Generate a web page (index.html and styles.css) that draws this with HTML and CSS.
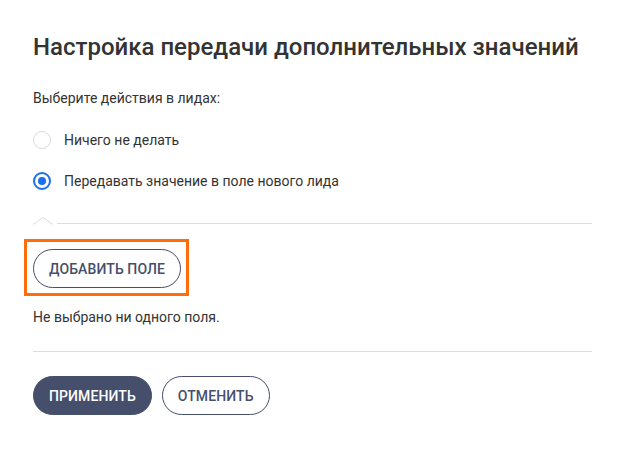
FILE: index.html
```html
<!DOCTYPE html>
<html lang="ru">
<head>
<meta charset="utf-8">
<link rel="stylesheet" href="styles.css">
</head>
<body>
<div class="panel">
  <h1 class="title">Настройка передачи дополнительных значений</h1>
  <p class="label">Выберите действия в лидах:</p>
  <div class="radios">
    <label class="radio"><span class="dot"></span><span>Ничего не делать</span></label>
    <label class="radio checked"><span class="dot"></span><span>Передавать значение в поле нового лида</span></label>
  </div>
  <div class="notch-divider">
    <svg class="notch" width="24" height="9" viewBox="0 0 24 9"><path d="M0 8.5 L10 1.5 L20 8.5" fill="none" stroke="#dcdcdc" stroke-width="1"/></svg>
  </div>
  <div class="highlight">
    <button class="btn btn-outline">ДОБАВИТЬ ПОЛЕ</button>
  </div>
  <p class="empty">Не выбрано ни одного поля.</p>
  <div class="divider"></div>
  <div class="actions">
    <button class="btn btn-primary">ПРИМЕНИТЬ</button>
    <button class="btn btn-outline">ОТМЕНИТЬ</button>
  </div>
</div>
</body>
</html>
```
FILE: styles.css
```css
* { box-sizing: border-box; }
html, body { margin: 0; padding: 0; background: #fff; }
body {
  font-family: Roboto, "Liberation Sans", sans-serif;
  color: #333;
  width: 624px;
  height: 449px;
  overflow: hidden;
}
.panel {
  padding: 32px 32px 0 33px;
}
.title {
  margin: 0;
  font-size: 24px;
  font-weight: 500;
  line-height: 30px;
  color: #333;
}
.label {
  margin: 27px 0 0;
  font-size: 14px;
  line-height: 18px;
  color: #333;
}
.radios {
  margin-top: 24px;
  display: flex;
  flex-direction: column;
  gap: 23px;
}
.radio {
  display: flex;
  align-items: center;
  gap: 13px;
  font-size: 14px;
  line-height: 18px;
  color: #333;
}
.dot {
  width: 18px;
  height: 18px;
  border-radius: 50%;
  border: 1px solid #dcdcdc;
  flex: none;
  position: relative;
}
.radio.checked .dot {
  border: 2px solid #1a6ef0;
}
.radio.checked .dot::after {
  content: "";
  position: absolute;
  left: 3px;
  top: 3px;
  width: 8px;
  height: 8px;
  border-radius: 50%;
  background: #1a6ef0;
}
.notch-divider {
  margin-top: 26px;
  position: relative;
  border-bottom: 1px solid #dcdcdc;
  height: 8px;
}
.notch {
  position: absolute;
  left: 0;
  top: 0;
  background: #fff;
}
.highlight {
  margin: 15px 0 0 -9px;
  width: fit-content;
  border: 3px solid #ff6c0a;
  padding: 7px 5px 5px 6px;
  display: flex;
}
.btn {
  font-family: Roboto, "Liberation Sans", sans-serif;
  font-size: 14px;
  font-weight: 500;
  letter-spacing: 0.1px;
  white-space: nowrap;
  height: 39px;
  border-radius: 20px;
  padding: 0 15px;
  cursor: pointer;
}
.btn-outline {
  background: #fff;
  color: #454f6b;
  border: 1px solid #454f6b;
}
.btn-primary {
  background: #454f6b;
  color: #fff;
  border: 1px solid #454f6b;
}
.empty {
  margin: 12px 0 0;
  font-size: 14px;
  line-height: 18px;
  color: #333;
}
.divider {
  margin-top: 25px;
  border-top: 1px solid #dcdcdc;
}
.actions {
  margin-top: 24px;
  display: flex;
  gap: 10px;
}
```
